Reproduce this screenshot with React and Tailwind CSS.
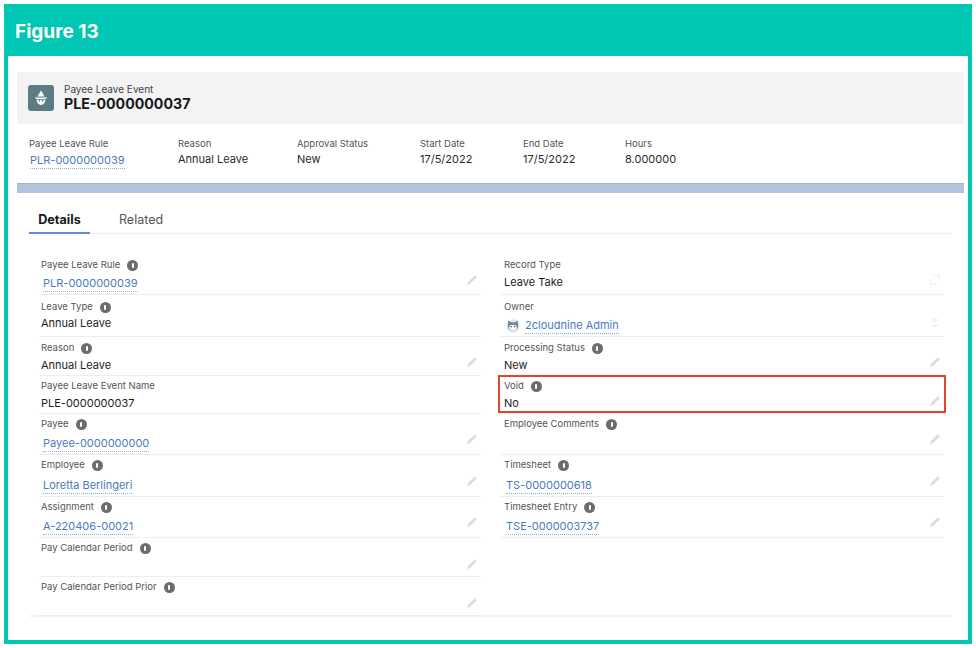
const FONT = "font-['Inter','Liberation_Sans',sans-serif]";

function Info() {
  return (
    <span className="ml-[7px] flex h-[11px] w-[11px] shrink-0 items-center justify-center rounded-full bg-[#6c6c6c]">
      <span className="h-[5px] w-[2px] rounded-[1px] bg-white" />
    </span>
  );
}

function Pencil() {
  return (
    <svg viewBox="0 0 12 12" className="h-3 w-3 shrink-0">
      <path d="M1 11 L2 8 L8.8 1.2 L10.8 3.2 L4 10 Z" fill="#dcdcdc" />
    </svg>
  );
}

function RecordTypeIcon() {
  return (
    <svg viewBox="0 0 12 12" className="h-3 w-3 shrink-0" fill="none" stroke="#f2f2f2" strokeWidth="1.4">
      <path d="M4 1.5 H10.5 V7 M8 10.5 H1.5 V5" />
    </svg>
  );
}

function PersonIcon() {
  return (
    <svg viewBox="0 0 12 12" className="h-3 w-3 shrink-0" fill="#f3f3f3">
      <circle cx="6" cy="4" r="2.6" />
      <path d="M1.5 11 C2 8 10 8 10.5 11 Z" />
    </svg>
  );
}

function Avatar() {
  return (
    <svg viewBox="0 0 14 14" className="ml-[2px] mr-[5px] h-[14px] w-[14px] shrink-0">
      <circle cx="7" cy="7" r="6.8" fill="#e3e9f0" />
      <path d="M2.2 1.6 L4.8 3.2 H9.2 L11.8 1.6 L12 7 C12 10.4 9.6 12 7 12 C4.4 12 2 10.4 2 7 Z" fill="#71859b" />
      <ellipse cx="7" cy="8.8" rx="3.8" ry="3" fill="#ffffff" />
      <circle cx="5.3" cy="7.7" r="0.7" fill="#33404f" />
      <circle cx="8.7" cy="7.7" r="0.7" fill="#33404f" />
    </svg>
  );
}

function RecordIcon() {
  return (
    <div className="flex h-[26px] w-[26px] shrink-0 items-center justify-center rounded-[3px] bg-[#5b7c84]">
      <svg viewBox="0 0 18 18" className="h-[18px] w-[18px]" fill="#ffffff">
        <path d="M9 1.5 L12.6 7.4 H5.4 Z" />
        <path d="M2.6 8.4 H15.4 L13.6 10 H4.4 Z" />
        <path d="M4.6 10.8 H13.4 C13.2 14 11.4 16 9 16 C6.6 16 4.8 14 4.6 10.8 Z" />
        <circle cx="7.4" cy="11.8" r="0.9" fill="#5b7c84" />
        <circle cx="10.6" cy="11.8" r="0.9" fill="#5b7c84" />
      </svg>
    </div>
  );
}

function Highlight({ label, value, link, width }) {
  return (
    <div className={`shrink-0 ${width}`}>
      <div className="text-[9.5px] leading-3 text-[#555555]">{label}</div>
      {link ? (
        <div className="mt-[2px] flex pl-px">
          <span className="border-b border-dotted border-[#8fb0dc] text-[11px] leading-4 text-[#4a7bc0]">{value}</span>
        </div>
      ) : (
        <div className="mt-[1px] text-[11px] leading-4 text-[#2b2b2b]">{value}</div>
      )}
    </div>
  );
}

function Field({ h, pt, mt, label, info, value, link, avatar, action = "pencil", pl = "pl-[2px]", pb = "pb-2", boxed }) {
  return (
    <div className={`relative flex items-end justify-between border-b border-[#eeeeee] pr-[3px] ${pb} ${pl} ${h}`}>
      <div className={`self-start ${pt}`}>
        <div className="flex h-3 items-center text-[9.5px] leading-3 text-[#555555]">
          <span>{label}</span>
          {info && <Info />}
        </div>
        {value && (
          <div className={`${mt} flex items-center text-[11px] leading-4 text-[#1d1d1d]`}>
            {avatar && <Avatar />}
            {link ? (
              <span className={`border-b border-dotted border-[#8fb0dc] text-[#4a7bc0] ${avatar ? "" : "ml-[2px]"}`}>{value}</span>
            ) : (
              <span>{value}</span>
            )}
          </div>
        )}
      </div>
      {action === "pencil" && <Pencil />}
      {action === "record" && <RecordTypeIcon />}
      {action === "person" && <PersonIcon />}
      {boxed && <div className="pointer-events-none absolute -left-[2px] -right-[2px] -top-[1px] bottom-0 border-2 border-[#e0452c]" />}
    </div>
  );
}

export default function App() {
  const r = "pl-1";
  return (
    <div className={`${FONT} h-[648px] w-[976px] overflow-hidden bg-white p-1`}>
      <div className="flex h-[640px] flex-col border-x-4 border-b-4 border-[#00c7b4] bg-white">
        <div className="-mx-1 flex h-[52px] shrink-0 items-center bg-[#00c7b4] pl-[11px] pt-1 text-[19px] font-bold text-white">
          Figure 13
        </div>

        <div className="pl-[9px] pr-1 pt-4">
          <div className="flex h-[52px] items-center bg-[#f3f3f3] pl-[11px]">
            <RecordIcon />
            <div className="ml-[10px] -mt-[2px]">
              <div className="text-[10px] leading-3 text-[#444444]">Payee Leave Event</div>
              <div className="text-[14.2px] font-bold leading-[17px] text-[#181818]">PLE-0000000037</div>
            </div>
          </div>

          <div className="flex h-[59px] pl-3 pt-[14px]">
            <Highlight width="w-[149px]" label="Payee Leave Rule" value="PLR-0000000039" link />
            <Highlight width="w-[119px]" label="Reason" value="Annual Leave" />
            <Highlight width="w-[123px]" label="Approval Status" value="New" />
            <Highlight width="w-[103px]" label="Start Date" value="17/5/2022" />
            <Highlight width="w-[102px]" label="End Date" value="17/5/2022" />
            <Highlight width="w-[100px]" label="Hours" value="8.000000" />
          </div>

          <div className="h-[10px] border-t border-[#a3b4d0] bg-[#b3c3de]" />
        </div>

        <div className="ml-[21px] mr-4 flex-1">
          <div className="flex h-[41px] items-end border-b border-[#eeeeee]">
            <div className="-mb-px flex h-[31px] w-[61px] items-start justify-center border-b-2 border-[#5b8fdc] pt-[9px] text-[12.6px] font-bold leading-4 text-[#181818]">
              Details
            </div>
            <div className="ml-[29px] h-[31px] pt-[10px] text-[12.5px] leading-4 text-[#555555]">Related</div>
          </div>

          <div className="ml-px flex h-[383px] gap-[19px] border-b-2 border-[#f1f1f1] pl-[9px] pr-2 pt-5">
            <div className="w-[442px] shrink-0">
              <Field h="h-[41px]" pt="pt-[5px]" mt="mt-1" label="Payee Leave Rule" info value="PLR-0000000039" link />
              <Field h="h-[42px]" pt="pt-[6px]" mt="mt-[2px]" label="Leave Type" info value="Annual Leave" action="none" />
              <Field h="h-[39px]" pb="pb-[7px]" pt="pt-[5px]" mt="mt-[3px]" label="Reason" info value="Annual Leave" />
              <Field h="h-[38px]" pt="pt-1" mt="mt-[3px]" label="Payee Leave Event Name" value="PLE-0000000037" action="none" />
              <Field h="h-[41px]" pb="pb-[9px]" pt="pt-1" mt="mt-[5px]" label="Payee" info value="Payee-0000000000" link />
              <Field h="h-[42px]" pb="pb-[9px]" pt="pt-1" mt="mt-[6px]" label="Employee" info value="Loretta Berlingeri" link />
              <Field h="h-[41px]" pb="pb-[9px]" pt="pt-1" mt="mt-[5px]" label="Assignment" info value="A-220406-00021" link />
              <Field h="h-[39px]" pb="pb-[6px]" pt="pt-1" label="Pay Calendar Period" info />
              <Field h="h-[39px]" pb="pb-[6px]" pt="pt-1" label="Pay Calendar Period Prior" info />
            </div>
            <div className="w-[444px] shrink-0">
              <Field pl={r} h="h-[41px]" pt="pt-[5px]" mt="mt-[3px]" label="Record Type" value="Leave Take" action="record" />
              <Field pl={r} h="h-[42px]" pt="pt-[6px]" mt="mt-1" label="Owner" value="2cloudnine Admin" link avatar action="person" />
              <Field pl={r} h="h-[39px]" pb="pb-[7px]" pt="pt-[5px]" mt="mt-[3px]" label="Processing Status" info value="New" />
              <Field pl={r} h="h-[38px]" pb="pb-[6px]" pt="pt-1" mt="mt-[3px]" label="Void" info value="No" boxed />
              <Field pl={r} h="h-[41px]" pb="pb-[9px]" pt="pt-1" label="Employee Comments" info />
              <Field pl={r} h="h-[42px]" pb="pb-[9px]" pt="pt-1" mt="mt-[6px]" label="Timesheet" info value="TS-0000000618" link />
              <Field pl={r} h="h-[41px]" pb="pb-[9px]" pt="pt-1" mt="mt-[5px]" label="Timesheet Entry" info value="TSE-0000003737" link />
            </div>
          </div>
        </div>
      </div>
    </div>
  );
}
